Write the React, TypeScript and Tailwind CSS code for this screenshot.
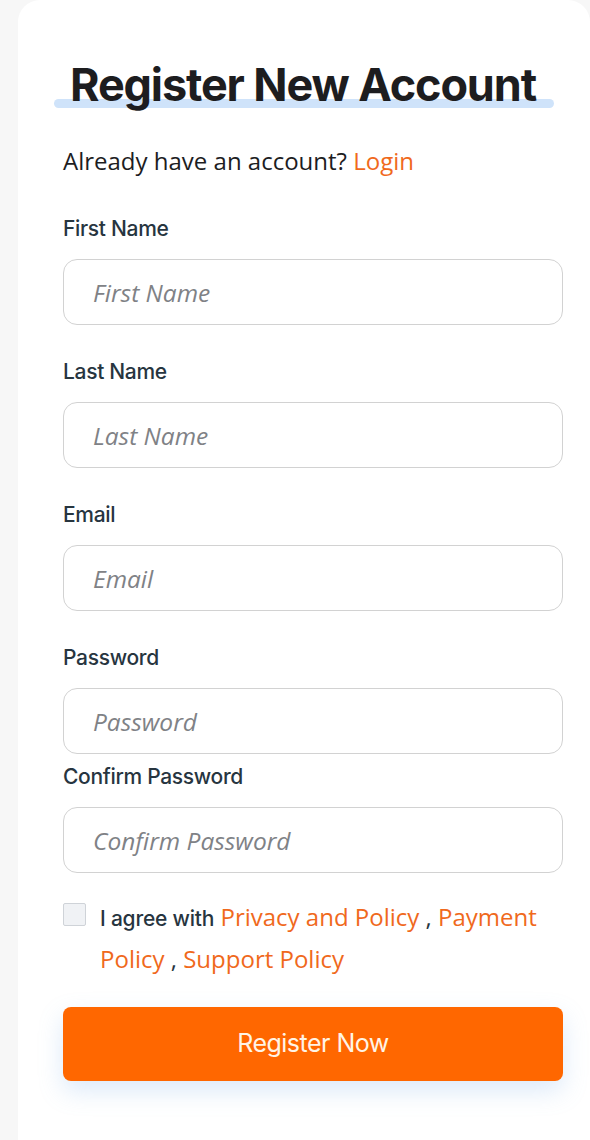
import React from "react";

function Field({ label, placeholder, tight }: { label: string; placeholder: string; tight?: boolean }) {
  return (
    <div className={tight ? "mt-[9px]" : "mt-[33px]"}>
      <label className="block font-['Inter',sans-serif] text-[21px] font-medium leading-[28px] tracking-[-0.015em] text-[#27353f]">
        {label}
      </label>
      <input
        type="text"
        placeholder={placeholder}
        className="mt-[16px] block h-[66px] w-full rounded-[14px] border-[1.5px] border-[#d2d2d2] bg-white px-[29px] font-['Open_Sans',sans-serif] text-[24.5px] italic text-[#333] outline-none placeholder:text-[#7f8286]"
      />
    </div>
  );
}

export default function App() {
  return (
    <div className="min-h-[1140px] bg-[#f7f7f7] pl-[18px]">
      <div className="flex min-h-[1140px] flex-col rounded-t-[22px] bg-white pl-[45px] pr-[27px] pt-[60px]">
        <div className="relative flex justify-center">
          <div className="absolute left-[-9px] top-[39px] h-[9px] w-[500px] rounded-full bg-[#cfe3fa]" />
          <h1 className="relative ml-[-20px] font-['Inter',sans-serif] text-[45px] font-bold leading-[50px] tracking-[-0.025em] text-[#1d1d1f]">
            Register New Account
          </h1>
        </div>
        <p className="mt-[35px] font-['Open_Sans',sans-serif] text-[24px] leading-[32px] text-[#1d1d1f]">
          Already have an account? <span className="text-[#f0691c]">Login</span>
        </p>
        <div className="mt-[5px] flex flex-col">
          <Field label="First Name" placeholder="First Name" />
          <Field label="Last Name" placeholder="Last Name" />
          <Field label="Email" placeholder="Email" />
          <Field label="Password" placeholder="Password" />
          <Field label="Confirm Password" placeholder="Confirm Password" tight />
        </div>
        <div className="mt-[30px] flex items-start gap-[14px]">
          <div className="mt-0 h-[23px] w-[23px] shrink-0 rounded-[2px] border border-[#cfd3d8] bg-[#f0f2f5]" />
          <p className="mt-[-7px] font-['Open_Sans',sans-serif] text-[24px] leading-[42px] text-[#f0691c]">
            <span className="font-['Inter',sans-serif] text-[21px] font-medium leading-none tracking-[-0.01em] text-[#27353f]">
              I agree with
            </span>{" "}
            <span>Privacy and Policy</span> <span className="text-[#27353f]">,</span> <span>Payment</span>{" "}
            <span>Policy</span> <span className="text-[#27353f]">,</span> <span>Support Policy</span>
          </p>
        </div>
        <button className="mt-[27px] flex h-[74px] w-full items-center justify-center rounded-[8px] bg-[#ff6700] font-['Inter',sans-serif] text-[25px] font-normal tracking-[-0.02em] text-[#fff4e6] shadow-[0_10px_24px_rgba(120,170,230,0.25)]">
          Register Now
        </button>
      </div>
    </div>
  );
}
